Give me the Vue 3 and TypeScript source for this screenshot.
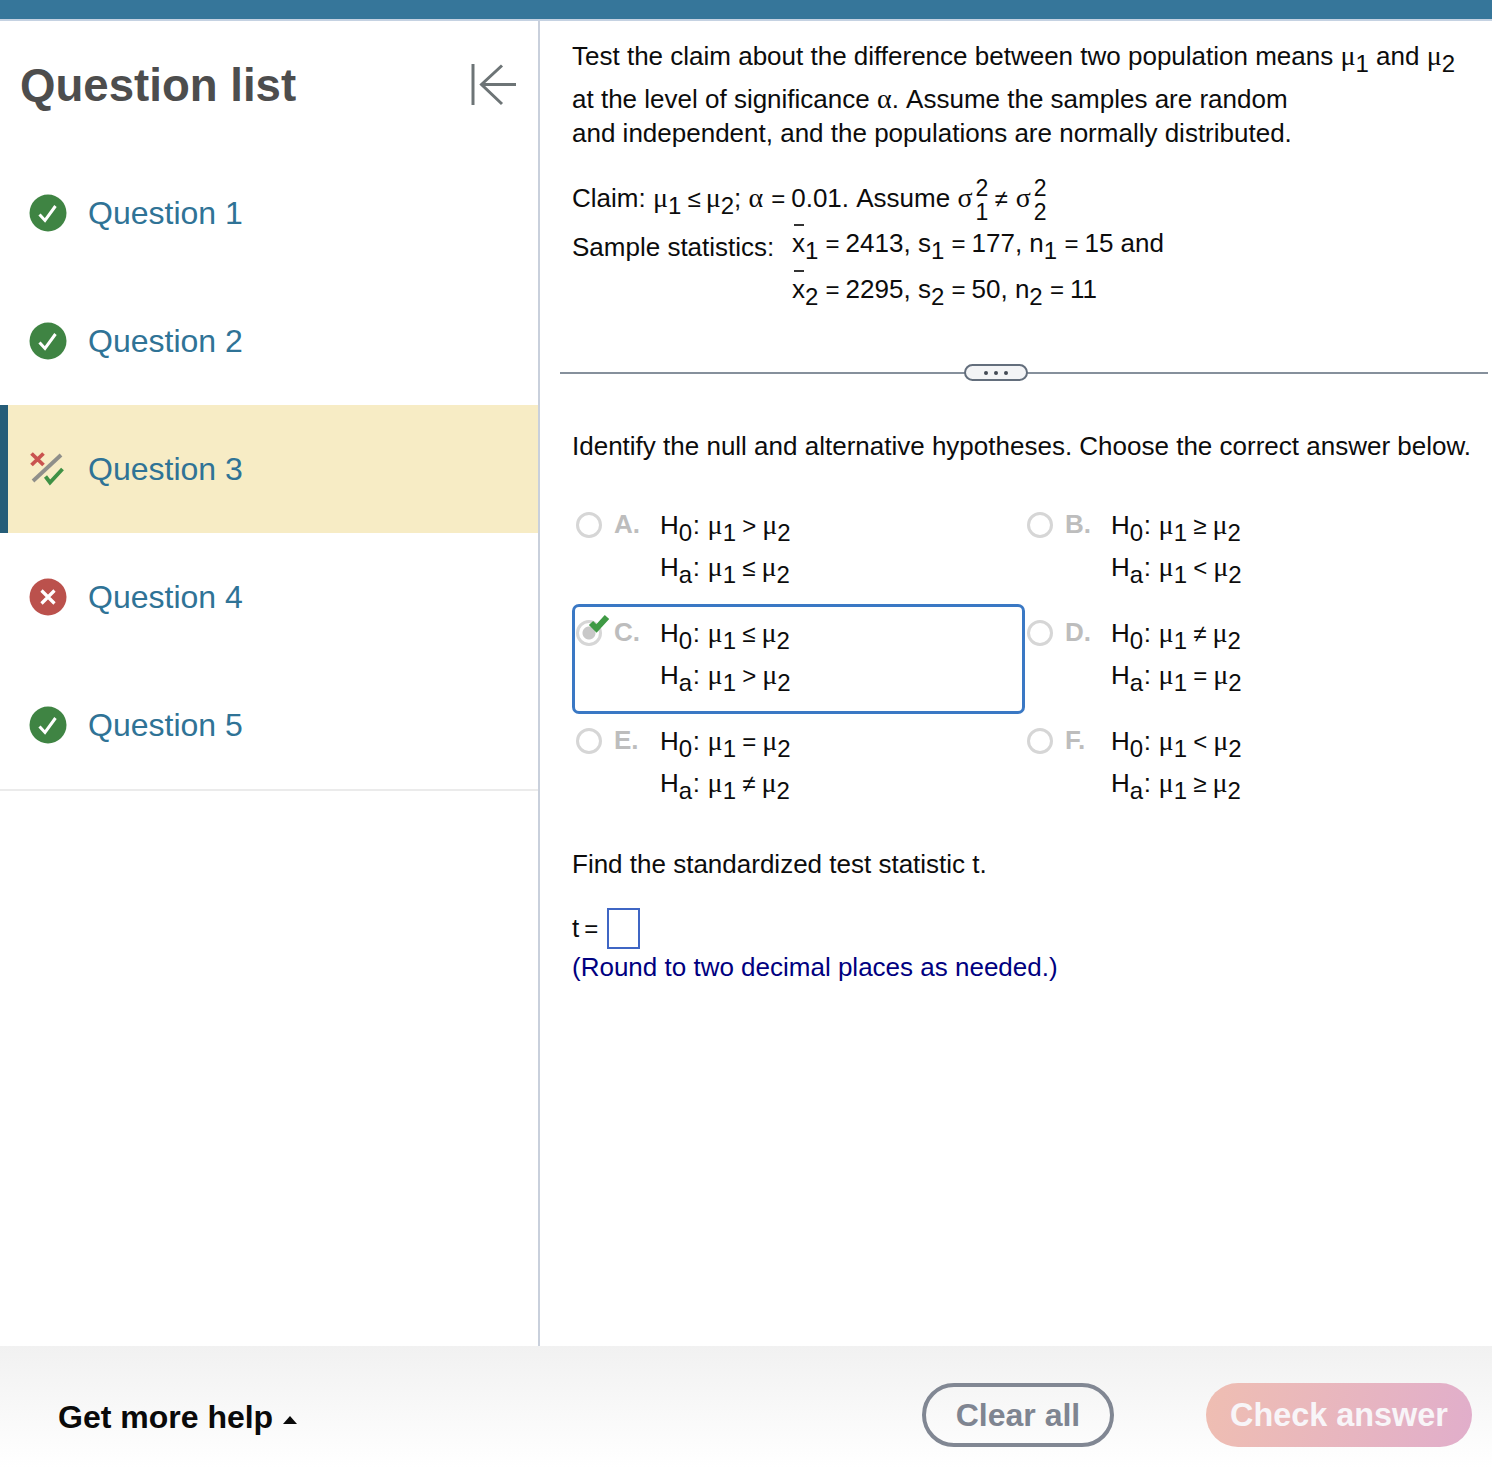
<script setup lang="ts">
type Status = 'ok' | 'bad' | 'partial'
const questions: { name: string; status: Status; current?: boolean }[] = [
  { name: 'Question 1', status: 'ok' },
  { name: 'Question 2', status: 'ok' },
  { name: 'Question 3', status: 'partial', current: true },
  { name: 'Question 4', status: 'bad' },
  { name: 'Question 5', status: 'ok' },
]
const options = [
  { key: 'A', h0: '>', ha: '≤' },
  { key: 'B', h0: '≥', ha: '<' },
  { key: 'C', h0: '≤', ha: '>', selected: true },
  { key: 'D', h0: '≠', ha: '=' },
  { key: 'E', h0: '=', ha: '≠' },
  { key: 'F', h0: '<', ha: '≥' },
]
</script>

<template>
  <div class="app">
    <header class="topbar"></header>
    <div class="body">
      <aside class="side">
        <div class="side-head">
          <h1 class="side-title">Question list</h1>
          <svg class="collapse" width="50" height="46" viewBox="0 0 50 46" fill="none" stroke="#6d7476" stroke-width="3">
            <path d="M4 2v41" />
            <path d="M12 22.500h35" />
            <path d="M33 3.500 12.500 22.500 33 42" />
          </svg>
        </div>
        <ul class="qlist">
          <li v-for="q in questions" :key="q.name" class="qrow" :class="{ current: q.current }">
            <svg v-if="q.status === 'ok'" class="qicon" width="38" height="38" viewBox="0 0 38 38">
              <circle cx="19" cy="19" r="18.500" fill="#3f8443" />
              <path d="M10.500 20.500 16 26.500 26.500 12" fill="none" stroke="#fff" stroke-width="3" />
            </svg>
            <svg v-else-if="q.status === 'bad'" class="qicon" width="38" height="38" viewBox="0 0 38 38">
              <circle cx="19" cy="19" r="18.500" fill="#bb514c" />
              <path d="M12.500 12.500 25.500 25.500M25.500 12.500 12.500 25.500" fill="none" stroke="#fff" stroke-width="3.200" />
            </svg>
            <svg v-else class="qicon" width="38" height="38" viewBox="0 0 38 38">
              <path d="M2.500 3.500 14.500 15M14.500 3.500 2.500 15" fill="none" stroke="#c9534f" stroke-width="3.800" />
              <path d="M4 31 32 5" fill="none" stroke="#8f8f8a" stroke-width="3.800" />
              <path d="M16.500 26.500 21 32.500 33.500 19" fill="none" stroke="#3f9145" stroke-width="3.800" />
            </svg>
            <span class="qname">{{ q.name }}</span>
          </li>
        </ul>
      </aside>

      <main class="main">
        <div class="line first">Test the claim about the difference between two population means <i class="g">μ</i><sub>1</sub> and <i class="g">μ</i><sub>2</sub></div>
        <div class="line l2">at the level of significance <i class="g">α</i>. Assume the samples are random</div>
        <div class="line">and independent, and the populations are normally distributed.</div>

        <div class="line claim">Claim: <i class="g">μ</i><sub>1</sub> <span class="rel">≤</span><i class="g">μ</i><sub>2</sub>; <i class="g">α</i><span class="rel eqclaim">=</span>0.01. Assume <i class="g">σ</i><span class="stack"><span>2</span><span>1</span></span> <span class="rel ne">≠</span><i class="g">σ</i><span class="stack"><span>2</span><span>2</span></span></div>

        <div class="stats">
          <div class="line stats-label">Sample statistics:</div>
          <div class="stats-values">
            <div class="line"><span class="xbar">x</span><sub>1</sub> <span class="rel tight">=</span>2413, s<sub>1</sub> <span class="rel tight">=</span>177, n<sub>1</sub> <span class="rel tight">=</span>15 and</div>
            <div class="line xline"><span class="xbar">x</span><sub>2</sub> <span class="rel tight">=</span>2295, s<sub>2</sub> <span class="rel tight">=</span>50, n<sub>2</sub> <span class="rel tight">=</span>11</div>
          </div>
        </div>

        <div class="divider"><span class="pill"><b></b><b></b><b></b></span></div>

        <div class="line identify">Identify the null and alternative hypotheses. Choose the correct answer below.</div>

        <div class="options">
          <div v-for="o in options" :key="o.key" class="option" :class="{ selected: o.selected }">
            <span class="radio"><svg v-if="o.selected" class="tick" width="24" height="22" viewBox="0 0 24 22"><path d="M3 11 8.500 16.500 19 5" fill="none" stroke="#3f9a45" stroke-width="6" /></svg></span>
            <span class="okey">{{ o.key }}.</span>
            <div class="omath">
              <div class="mline">H<sub>0</sub><span class="colon">:</span> <i class="g">μ</i><sub>1</sub> <span class="rel">{{ o.h0 }}</span><i class="g">μ</i><sub>2</sub></div>
              <div class="mline">H<sub>a</sub><span class="colon">:</span> <i class="g">μ</i><sub>1</sub> <span class="rel">{{ o.ha }}</span><i class="g">μ</i><sub>2</sub></div>
            </div>
          </div>
        </div>

        <div class="line find">Find the standardized test statistic t.</div>
        <div class="answer"><span>t<span class="rel eq">=</span></span><span class="inputbox"></span></div>
        <div class="line hint">(Round to two decimal places as needed.)</div>
      </main>
    </div>

    <footer class="footer">
      <span class="help">Get more help <i class="caret"></i></span>
      <button class="btn clear" type="button">Clear all</button>
      <button class="btn check" type="button">Check answer</button>
    </footer>
  </div>
</template>

<style>
html, body { margin: 0; background: #fff; }
</style>

<style scoped>
.app {
  width: 1492px;
  height: 1484px;
  display: flex;
  flex-direction: column;
  font-family: "Liberation Sans", Arial, sans-serif;
  overflow: hidden;
}
.topbar {
  height: 19px;
  flex: none;
  background: #36769a;
  border-bottom: 2px solid #c5d2e2;
}
.body { flex: 1; display: flex; min-height: 0; }

.side {
  width: 538px;
  flex: none;
  border-right: 2px solid #c9d0dc;
}
.side-head {
  height: 128px;
  box-sizing: border-box;
  display: flex;
  align-items: center;
  justify-content: space-between;
  padding: 0 19px 0 20px;
}
.side-title {
  margin: 2px 0 0;
  font-size: 45.600px;
  font-weight: 700;
  color: #4d4d4d;
}
.collapse { flex: none; }
.qlist {
  list-style: none;
  margin: 0;
  padding: 0;
  border-bottom: 2px solid #ebebeb;
}
.qrow {
  height: 128px;
  display: flex;
  align-items: center;
  padding-left: 29px;
  box-sizing: border-box;
}
.qrow.current {
  background: #f7ecc5;
  border-left: 8px solid #265d78;
  padding-left: 21px;
}
.qicon { flex: none; }
.qname {
  margin-left: 21px;
  font-size: 32px;
  color: #2f7396;
}

.main {
  flex: 1;
  min-width: 0;
  padding: 15px 0 0 32px;
  color: #0c0c0c;
  font-size: 26px;
}
.line { height: 34px; line-height: 34px; white-space: nowrap; }
.first { height: 42px; line-height: 40px; }
.l2 { margin-top: 4px; }
.claim { margin-top: 31px; }
.g {
  font-family: "Liberation Serif", serif;
  font-style: normal;
  font-size: 28px;
}
sub {
  font-size: 24px;
  line-height: 0;
  vertical-align: -7px;
}
.rel { font-size: 24px; margin: 0 5px 0 -1px; }
.rel.tight { margin: 0 6px 0 0; }
.rel.eq { margin: 0 0 0 5px; }
.rel.eqclaim { margin: 0 6px 0 8px; }
.rel.ne { margin-right: 8px; }
.stack {
  display: inline-flex;
  flex-direction: column;
  vertical-align: middle;
  font-size: 23px;
  line-height: 24px;
  margin-left: 3px;
  height: 34px;
  justify-content: center;
}
.stack span { flex: none; }
.stats { display: flex; margin-top: 11px; }
.stats-label { width: 220px; margin-top: 4px; }
.xline { margin-top: 12px; }
.xbar { position: relative; display: inline-block; }
.xbar::before {
  content: "";
  position: absolute;
  left: 2px;
  right: 1px;
  top: -2px;
  border-top: 2px solid #333;
}
.divider {
  margin: 58px 0 0 -12px;
  width: 928px;
  height: 17px;
  box-sizing: border-box;
  padding-right: 56px;
  display: flex;
  align-items: center;
  justify-content: center;
  background: linear-gradient(#86909c, #86909c) center / 100% 2px no-repeat;
}
.pill {
  width: 64px;
  height: 17px;
  box-sizing: border-box;
  border: 2px solid #636e7c;
  border-radius: 9px;
  background: #f3f4f6;
  display: flex;
  align-items: center;
  justify-content: center;
  gap: 6px;
}
.pill b { width: 4px; height: 4px; border-radius: 50%; background: #444b55; }
.identify { margin-top: 48px; }
.options {
  margin-top: 34px;
  display: grid;
  grid-template-columns: 451px 1fr;
  grid-auto-rows: 108px;
}
.option {
  position: relative;
  display: flex;
  padding-left: 4px;
}
.option.selected::after {
  content: "";
  position: absolute;
  inset: -1px -2px -1px 0;
  border: 3px solid #3a78c4;
  border-radius: 7px;
  pointer-events: none;
}
.radio {
  position: relative;
  flex: none;
  width: 26px;
  height: 26px;
  margin: 15px 12px 0 0;
  box-sizing: border-box;
  border: 3px solid #d6d6d6;
  border-radius: 50%;
  background: #fff;
}
.selected .radio { background: radial-gradient(circle, #c8c8c8 0 6px, #fff 7px); }
.tick { position: absolute; left: 9px; top: -11px; }
.okey {
  flex: none;
  width: 46px;
  margin-top: 10px;
  height: 34px;
  line-height: 34px;
  font-size: 26px;
  font-weight: 700;
  color: #bdbdbd;
}
.omath { padding-top: 7px; }
.mline { height: 42px; line-height: 42px; white-space: nowrap; }
.mline .rel { margin: 0 6px 0 -1px; }
.colon { margin: 0 0.500px; }
.find { margin-top: 26px; }
.answer {
  margin-top: 27px;
  height: 41px;
  display: flex;
  align-items: center;
  gap: 9px;
}
.inputbox {
  width: 33px;
  height: 41px;
  box-sizing: border-box;
  border: 2px solid #3f66c4;
}
.hint { margin-top: 1px; color: #000080; }

.footer {
  height: 138px;
  flex: none;
  box-sizing: border-box;
  display: flex;
  align-items: center;
  padding: 0 20px 0 58px;
  background: linear-gradient(#f1f1f1, #fff 88%);
}
.help {
  margin-right: auto;
  padding-top: 4px;
  font-size: 32px;
  font-weight: 700;
  color: #0a0a0a;
  display: flex;
  align-items: center;
}
.caret {
  margin: 6px 0 0 10px;
  width: 0;
  height: 0;
  border-left: 7.500px solid transparent;
  border-right: 7.500px solid transparent;
  border-bottom: 8px solid #0a0a0a;
}
.btn {
  height: 64px;
  border-radius: 32px;
  box-sizing: border-box;
  font: 700 32px "Liberation Sans", Arial, sans-serif;
  padding: 0;
}
.clear {
  width: 192px;
  margin-right: 92px;
  border: 4px solid #818793;
  background: transparent;
  color: #7f8591;
}
.check {
  width: 266px;
  border: 0;
  font-size: 32.400px;
  background: linear-gradient(100deg, #efbeb2, #e1aecb);
  color: #f8f5f8;
}
</style>
